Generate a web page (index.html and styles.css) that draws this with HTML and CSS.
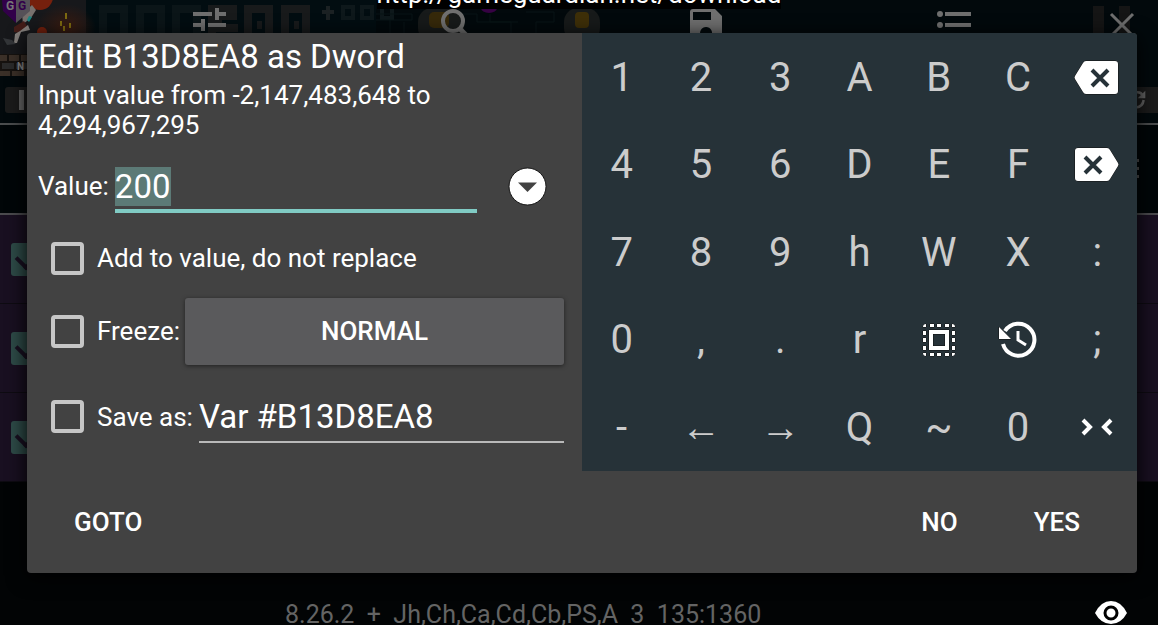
FILE: index.html
```html
<!DOCTYPE html>
<html lang="en">
<head>
    <meta charset="UTF-8" />
    <meta name="viewport" content="width=device-width, initial-scale=1" />
    <title>Edit value</title>
    <link rel="stylesheet" href="styles.css">
</head>
<body>

    <!-- Dimmed app behind the dialog -->
    <div class="app">
        <header class="app-top">
            <svg class="game" width="900" height="124" aria-hidden="true">
                <defs>
                    <radialGradient id="glow"><stop offset="0" stop-color="#3a1b10" /><stop offset="1" stop-color="#3a1b10" stop-opacity="0" /></radialGradient>
                </defs>
                <rect width="86" height="76" fill="#17181b" />
                <rect x="86" width="290" height="33" fill="#020d11" />
                <ellipse cx="66" cy="28" rx="30" ry="24" fill="url(#glow)" />
                <circle cx="40" cy="-3" r="13" fill="#75200d" />
                <circle cx="42" cy="32" r="5" fill="#75200d" />
                <path d="M65 13h2v6h-2zM60 21h2v5h-2zM63 26h2v5h-2zM69 23h2v5h-2z" fill="#7d6a10" />
                <!-- running hero -->
                <path d="M22 14l10-9 4 5-5 8-8 6z" fill="#77716e" />
                <path d="M14 27l10-6 3 5-7 7-6-1z" fill="#431c17" />
                <path d="M20 31l8-6 2 5-9 2-4 11h-3l1-9z" fill="#85807d" />
                <path d="M3 38l9 2 4 4-9 1z" fill="#333538" />
                <path d="M29 16l3 1-3 5-2-2z" fill="#1b8582" />
                <path d="M2 0h14v23L3 11z" fill="#32004a" />
                <path d="M16 0h14v11L16 23z" fill="#555158" />
                <text class="logo" x="6" y="10">G</text>
                <text class="logo logo-dark" x="18" y="10">G</text>
                <!-- brick floor -->
                <rect y="54" width="28" height="22" fill="#16120f" />
                <path d="M0 55h7v6H0zM9 55h10v6H9zM21 55h7v6h-7zM0 71h10v5H0zM12 71h12v5H12z" fill="#3b3028" />
                <path d="M2 63h12v6H2zM16 63h12v6H16z" fill="#2a2a2a" />
                <text class="sign" x="17" y="70">N</text>
                <!-- pixel blocks -->
                <g fill="none" stroke-width="8">
                    <path d="M103 34V9h21v25M140 34V9h21v25M176 34V9h21v25" stroke="#0b1518" />
                    <path d="M212 34V9h21v7h-15v12h20M248 34V9h21v25M285 34V9h21v25" stroke="#181a1b" />
                </g>
                <path d="M257 21h5v8h-5zM294 21h5v8h-5z" fill="#181a1b" />
                <path d="M322 12h12M328 6v14" stroke="#1b2123" stroke-width="4" />
                <path d="M343 18V7h10v11zM362 18V7h10v11zM382 18V7h10v11z" fill="none" stroke="#0e181b" stroke-width="4" />
                <path d="M376 14h36v6h-36M390 20v13M404 22v11M455 14h22v8h34v11M490 14v8h28M526 12h28v10h-18v11" fill="none" stroke="#091417" />
                <rect x="418" y="8" width="46" height="34" rx="14" fill="#171a1a" />
                <rect x="429" y="12" width="20" height="16" rx="5" fill="#36290a" />
                <ellipse cx="489" cy="8" rx="8" ry="5" fill="#360243" />
                <rect x="564" y="8" width="36" height="34" rx="14" fill="#171a1a" />
                <rect x="575" y="12" width="14" height="16" rx="4" fill="#3e2f08" />
            </svg>
            <nav class="tools">
                <button class="tool" aria-label="Settings">
                    <svg width="34" height="34" viewBox="0 0 34 34" fill="none" stroke="#6f6f6f" stroke-width="4"><path d="M0 9h19M22 9h11M24 3v12M0 20h8M10 14v12M15 20h18M17 30v4" /></svg>
                </button>
                <button class="tool" aria-label="Search">
                    <svg width="34" height="34" viewBox="0 0 34 34" fill="none" stroke="#6f6f6f" stroke-width="4"><circle cx="12" cy="16" r="10" /><path d="M19 24l10 10" stroke-width="5" /></svg>
                </button>
                <button class="tool" aria-label="Save">
                    <svg width="34" height="34" viewBox="0 0 34 34"><path fill="#6f6f6f" fill-rule="evenodd" d="M4 4h22l7 7v23H1V7q0-3 3-3zM4 7v8h18V7zM17 22a6 6 0 1 0 .1 0z" /></svg>
                </button>
                <button class="tool" aria-label="List">
                    <svg width="34" height="34" viewBox="0 0 34 34" fill="#6f6f6f"><circle cx="3" cy="9" r="3" /><circle cx="3" cy="20" r="3" /><path d="M8 7h26v4H8zM8 18h26v4H8z" /></svg>
                </button>
                <button class="tool tool-close" aria-label="Close">
                    <svg width="34" height="34" viewBox="0 0 34 34"><path fill="#151515" d="M-12 1h11v30h-11zM14 1h11v30H14z" /><path d="M6 9l22 22M28 9L6 31" stroke="#6f6f6f" stroke-width="3" /></svg>
                </button>
            </nav>
            <div class="strip">
                <button class="chip" aria-label="Pause"><span class="bar"></span></button>
                <button class="chip chip-right" aria-label="Refresh">
                    <svg width="26" height="26" viewBox="0 0 26 26" fill="none" stroke="#666" stroke-width="3"><path d="M0 4q6-1 8 4M0 22q8-1 9-9" /><path d="M11 2v9H2z" fill="#666" stroke="none" /></svg>
                </button>
            </div>
        </header>
        <div class="search-row">
            <svg width="6" height="24" viewBox="0 0 6 24" fill="#555" aria-hidden="true"><path d="M0 2h3v3H0zM0 10h3v3H0zM0 18h3v3H0z" /></svg>
        </div>
        <ul class="results">
            <li><input type="checkbox" checked aria-label="Result 1" /></li>
            <li><input type="checkbox" checked aria-label="Result 2" /></li>
            <li><input type="checkbox" checked aria-label="Result 3" /></li>
        </ul>
        <footer class="status">8.26.2  +  Jh,Ch,Ca,Cd,Cb,PS,A  3  135:1360</footer>
    </div>

    <div class="toast">http://gameguardian.net/download</div>

    <button class="eye" aria-label="Show">
        <svg width="32" height="26" viewBox="0 0 32 26"><path d="M0 13Q6 1 16 1t16 12Q26 24 16 24T0 13z" fill="#fff" /><circle cx="16" cy="13" r="6" fill="none" stroke="#000" stroke-width="3" /></svg>
    </button>

    <!-- Dialog -->
    <div class="overlay">
        <form class="dialog">
            <div class="main">
                <div class="fields">
                    <h1>Edit B13D8EA8 as Dword</h1>
                    <p>Input value from -2,147,483,648 to 4,294,967,295</p>

                    <div class="row">
                        <label for="value">Value:</label>
                        <input type="text" class="text value" id="value" value="200" />
                        <button type="button" class="drop" aria-label="Recent values">
                            <svg width="39" height="39" viewBox="0 0 39 39"><circle cx="19.5" cy="19.5" r="18.5" fill="#fff" stroke="#161616" /><path d="M10 15.500h19l-9.500 9.500z" fill="#424242" /></svg>
                        </button>
                    </div>

                    <div class="row">
                        <input type="checkbox" class="check" id="add" />
                        <label for="add">Add to value, do not replace</label>
                    </div>

                    <div class="row row-freeze">
                        <input type="checkbox" class="check" id="freeze" />
                        <label for="freeze">Freeze:</label>
                        <button type="button" class="mode">NORMAL</button>
                    </div>

                    <div class="row row-save">
                        <input type="checkbox" class="check" id="save" />
                        <label for="save">Save as:</label>
                        <input type="text" class="text name" id="name" aria-label="Name" value="Var #B13D8EA8" />
                    </div>
                </div>

                <div class="keypad">
                    <button type="button">1</button>
                    <button type="button">2</button>
                    <button type="button">3</button>
                    <button type="button">A</button>
                    <button type="button">B</button>
                    <button type="button">C</button>
                    <button type="button" aria-label="Backspace">
                        <svg width="46" height="36" viewBox="0 0 46 36"><path class="solid" d="M12 1h29q3 0 3 3v27q0 3-3 3H12q-2 0-3-2L1 19q-1-1.500 0-3L9 3q1-2 3-2z" /><path d="M18 10l16 16M34 10L18 26" stroke="#263238" stroke-width="4" /></svg>
                    </button>

                    <button type="button">4</button>
                    <button type="button">5</button>
                    <button type="button">6</button>
                    <button type="button">D</button>
                    <button type="button">E</button>
                    <button type="button">F</button>
                    <button type="button" aria-label="Delete">
                        <svg width="46" height="36" viewBox="0 0 46 36"><path class="solid" d="M4 1h29q2 0 3 2l8 13q1 1.500 0 3l-8 13q-1 2-3 2H4q-3 0-3-3V4q0-3 3-3z" /><path d="M11 10l16 16M27 10L11 26" stroke="#263238" stroke-width="4" /></svg>
                    </button>

                    <button type="button">7</button>
                    <button type="button">8</button>
                    <button type="button">9</button>
                    <button type="button">h</button>
                    <button type="button">W</button>
                    <button type="button">X</button>
                    <button type="button">:</button>

                    <button type="button">0</button>
                    <button type="button">,</button>
                    <button type="button">.</button>
                    <button type="button">r</button>
                    <button type="button" aria-label="Select all">
                        <svg width="36" height="36" viewBox="0 0 36 36"><path class="solid" fill-rule="evenodd" d="M8 8h20v20H8zM12 12v12h12V12z" /><path class="solid" d="M2 5q0-3 3-3v3zM9 2h4v3H9zM16 2h4v3h-4zM24 2h4v3h-4zM31 2q3 0 3 3h-3zM2 9h3v4H2zM2 16h3v4H2zM2 24h3v4H2zM31 9h3v4h-3zM31 16h3v4h-3zM31 24h3v4h-3zM2 31h3v3q-3 0-3-3zM9 31h4v3H9zM16 31h4v3h-4zM24 31h4v3h-4zM31 31h3q0 3-3 3z" /></svg>
                    </button>
                    <button type="button" aria-label="History">
                        <svg width="40" height="38" viewBox="0 0 40 38" fill="none"><path d="M7 10A16 16 0 1 1 5 23" stroke="#fff" stroke-width="4" /><path class="solid" d="M1 6v12h12z" /><path d="M20 10v9l8 5" stroke="#fff" stroke-width="3" /></svg>
                    </button>
                    <button type="button">;</button>

                    <button type="button">-</button>
                    <button type="button">←</button>
                    <button type="button">→</button>
                    <button type="button">Q</button>
                    <button type="button">~</button>
                    <button type="button">0</button>
                    <button type="button" aria-label="Collapse">
                        <svg width="32" height="20" viewBox="0 0 32 20" fill="none" stroke="#fff" stroke-width="4"><path d="M2 2l7 7-7 7M30 2l-7 7 7 7" /></svg>
                    </button>
                </div>
            </div>

            <div class="actions">
                <button type="button">GOTO</button>
                <button type="button" class="no">NO</button>
                <button type="button">YES</button>
            </div>
        </form>
    </div>

    <script>
  const valueInput = document.getElementById('value');
  valueInput.focus();
  valueInput.select();
    </script>

</body>
</html>
```
FILE: styles.css
```css
* {
    box-sizing: border-box;
}

body {
    margin: 0;
    background: #020405;
    color: #fff;
    font-family: Roboto, "Noto Sans", sans-serif;
    font-size: 26px;
    line-height: 30px;
    overflow: hidden;
}

button {
    padding: 0;
    border: none;
    background: none;
    color: inherit;
    font: inherit;
    cursor: pointer;
}

button svg {
    display: block;
}

/* app behind the dialog */
.app {
    display: flex;
    flex-direction: column;
    height: 100vh;
    overflow: hidden;
}

.app-top {
    position: relative;
    height: 125px;
    flex: none;
    background: #02090c;
    border-bottom: 2px solid #4b4d4e;
    overflow: hidden;
}

.game {
    position: absolute;
    left: 0;
    top: 0;
}

.logo {
    font-size: 12px;
    font-weight: bold;
    fill: #777;
}

.logo-dark {
    fill: #32004a;
}

.sign {
    font-size: 10px;
    font-weight: bold;
    fill: #888;
}

.tools {
    position: relative;
    display: flex;
    align-items: center;
    padding: 5px 19px 0 86px;
}

.tool {
    display: flex;
    flex: 1;
    justify-content: center;
}

.tool-close {
    flex: none;
    width: 61px;
    justify-content: flex-end;
}

.tool svg {
    overflow: visible;
}

.strip {
    position: relative;
    display: flex;
    justify-content: space-between;
    margin-top: 48px;
    padding-left: 5px;
}

.chip {
    display: flex;
    align-items: center;
    width: 40px;
    height: 26px;
    padding-left: 14px;
    border-radius: 3px;
    background: #1b1b1b;
}

.chip-right {
    width: 22px;
    padding: 0;
    border-radius: 0;
}

.bar {
    width: 5px;
    height: 20px;
    background: #666;
}

.search-row {
    display: flex;
    align-items: center;
    justify-content: flex-end;
    height: 90px;
    flex: none;
    padding-right: 16px;
    background: #010608;
    border-bottom: 2px solid #4b4b4e;
}

.results {
    flex: none;
    margin: 0;
    padding: 0;
    list-style: none;
    background: #191021;
}

.results li {
    display: flex;
    align-items: center;
    height: 89px;
    padding-left: 11px;
    border-bottom: 1px solid #0e0b12;
}

.results input {
    appearance: none;
    width: 33px;
    height: 33px;
    margin: 0;
    padding: 8px 0 0 7px;
    border-radius: 3px;
    background: #2e4b48;
}

.results input::before {
    content: "";
    display: block;
    width: 12px;
    height: 12px;
    border: solid #191021;
    border-width: 0 0 4px 4px;
    transform: rotate(-45deg);
}

.status {
    margin-top: auto;
    padding-left: 285px;
    color: #646464;
    font-size: 25px;
    line-height: 20px;
    white-space: pre;
}

.toast {
    position: absolute;
    top: -21px;
    left: 0;
    right: 0;
    width: max-content;
    margin: 0 auto;
    background: #000;
}

.eye {
    position: absolute;
    right: 31px;
    bottom: -1px;
}

/* dialog */
.overlay {
    position: absolute;
    inset: 0;
    padding: 33px 21px 0 27px;
}

.dialog {
    border-radius: 4px;
    background: #424242;
    box-shadow: 0 4px 20px #000;
    overflow: hidden;
}

.main {
    display: grid;
    grid-template-columns: minmax(0, 1fr) minmax(0, 1fr);
    min-height: 70vh;
}

.fields {
    padding: 4px 18px 0 11px;
}

h1 {
    margin: 0;
    font-size: 33px;
    font-weight: normal;
    line-height: 40px;
}

p {
    margin: 3px 0 10px;
}

.row {
    display: flex;
    align-items: center;
    height: 72px;
}

.row-freeze {
    height: 74px;
}

.row-save {
    height: 97px;
}

.text {
    flex: 1;
    min-width: 0;
    margin-left: 6px;
    padding: 0;
    border: none;
    outline: none;
    background: none;
    color: #fff;
    font: 33px/44px Roboto, "Noto Sans", sans-serif;
}

.value {
    height: 54px;
    padding-top: 4px;
    border-bottom: 4px solid #80cbc4;
}

.value::selection {
    background: rgba(92, 122, 118, 0.99);
    color: #fff;
}

.name {
    height: 52px;
    padding-top: 2px;
    border-bottom: 2px solid #b9b9b9;
}

.drop {
    margin: 0 17px 0 31px;
}

.check {
    appearance: none;
    width: 33px;
    height: 33px;
    margin: 0 13px;
    border: 4px solid #c6c6c6;
    border-radius: 4px;
}

.mode {
    flex: 1;
    height: 67px;
    margin-left: 5px;
    border-radius: 3px;
    background: #5a5a5c;
    box-shadow: 0 1px 4px rgba(0, 0, 0, 0.5);
    font-weight: 500;
}

.keypad {
    display: grid;
    grid-template-columns: repeat(7, 1fr);
    grid-auto-rows: 1fr;
    background: #263238;
}

.keypad button {
    display: flex;
    align-items: center;
    justify-content: center;
    padding-top: 2px;
    color: #ccc;
    font-size: 40px;
}

.solid {
    fill: #fff;
    stroke: #111;
    paint-order: stroke;
}

.actions {
    display: flex;
    align-items: center;
    height: 102px;
    padding: 0 57px 0 47px;
    gap: 76px;
}

.actions button {
    font-weight: 500;
}

.no {
    margin-left: auto;
}
```
